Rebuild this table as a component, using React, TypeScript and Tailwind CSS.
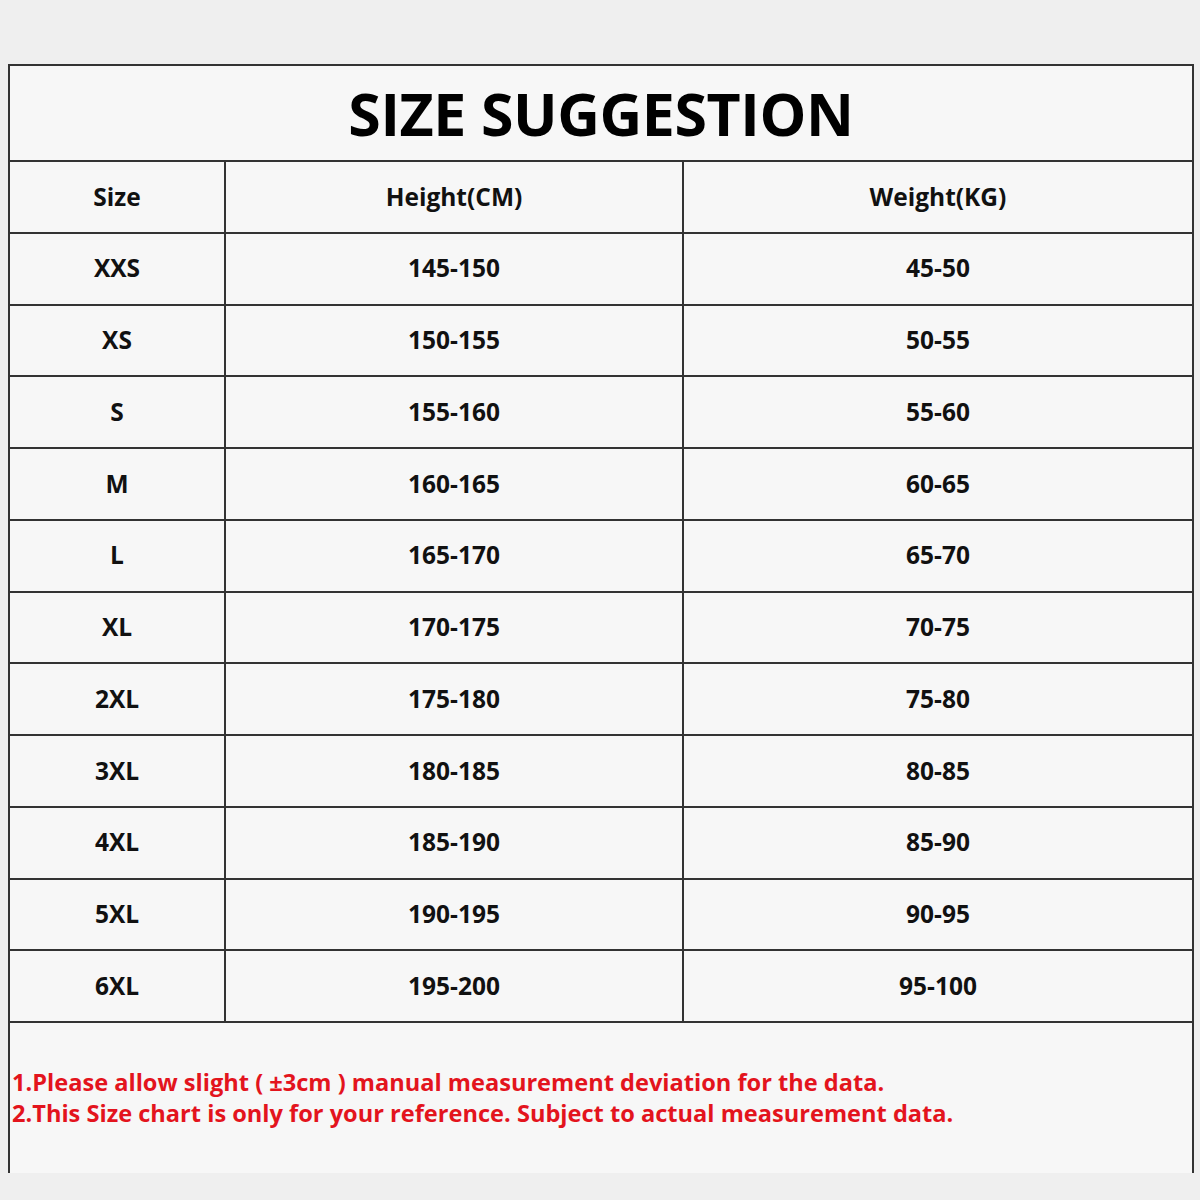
const ROWS: [string, string, string][] = [
  ["XXS", "145-150", "45-50"],
  ["XS", "150-155", "50-55"],
  ["S", "155-160", "55-60"],
  ["M", "160-165", "60-65"],
  ["L", "165-170", "65-70"],
  ["XL", "170-175", "70-75"],
  ["2XL", "175-180", "75-80"],
  ["3XL", "180-185", "80-85"],
  ["4XL", "185-190", "85-90"],
  ["5XL", "190-195", "90-95"],
  ["6XL", "195-200", "95-100"],
];

const font = { fontFamily: '"Open Sans", "Noto Sans", sans-serif' };

function Row({ cells }: { cells: [string, string, string] }) {
  return (
    <div className="grid h-[71.75px] grid-cols-[216px_458px_1fr] border-b-2 border-[#333]">
      {cells.map((c, i) => (
        <div
          key={i}
          className={
            "flex items-center justify-center text-[24.5px] font-bold text-[#111] " +
            (i < 2 ? "border-r-2 border-[#333]" : "")
          }
        >
          {c}
        </div>
      ))}
    </div>
  );
}

export default function App() {
  return (
    <div className="h-[1200px] w-[1200px] bg-[#efefef] pl-[8px] pt-[64px]" style={font}>
      <div className="w-[1186px] border-x-2 border-t-2 border-[#333] bg-[#f7f7f7]">
        <div className="flex h-[96px] items-center justify-center border-b-2 border-[#333]">
          <h1 className="text-[59px] font-bold tracking-[-0.4px] text-black">SIZE SUGGESTION</h1>
        </div>
        <Row cells={["Size", "Height(CM)", "Weight(KG)"]} />
        {ROWS.map((r) => (
          <Row key={r[0]} cells={r} />
        ))}
        <div className="flex h-[150px] flex-col justify-center pl-[2px] text-[23.6px] font-bold leading-[31px] text-[#e3141d]">
          <p>1.Please allow slight ( ±3cm ) manual measurement deviation for the data.</p>
          <p>2.This Size chart is only for your reference. Subject to actual measurement data.</p>
        </div>
      </div>
    </div>
  );
}
